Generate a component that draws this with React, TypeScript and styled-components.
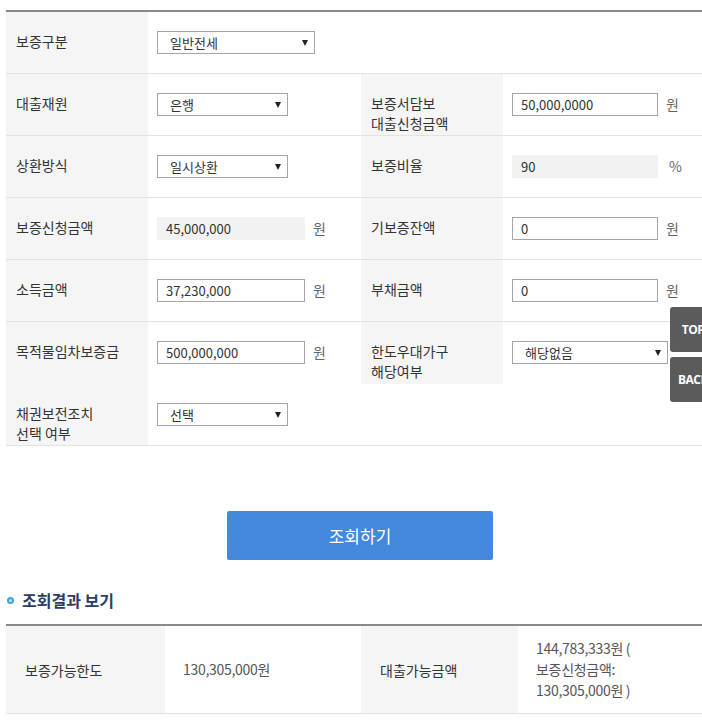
import React from "react";
import styled, { createGlobalStyle } from "styled-components";

const Global = createGlobalStyle`
  html, body { margin: 0; padding: 0; background: #fff; }
  body {
    font-family: "Noto Sans CJK KR", "Noto Sans", sans-serif;
    color: #333;
    overflow: hidden;
  }
  * { box-sizing: border-box; }
`;

const Page = styled.div`
  position: relative;
  width: 702px;
  min-height: 720px;
  padding: 10px 0 0 6px;
`;

const FormTable = styled.div`
  border-top: 2px solid #8a8a8a;
`;

const FormRow = styled.div<{ $noLine?: boolean }>`
  display: grid;
  grid-template-columns: 142px 213px 142px 1fr;
  min-height: 62px;
  border-bottom: ${(p) => (p.$noLine ? "none" : "1px solid #e3e3e3")};
`;

const Label = styled.div<{ $empty?: boolean }>`
  background: ${(p) => (p.$empty ? "#fff" : "#f5f5f5")};
  padding: 19px 0 0 10px;
  font-size: 14px;
  line-height: 20px;
  color: #333;
`;

const Value = styled.div`
  display: flex;
  align-items: flex-start;
  gap: 8px;
  padding: 19px 0 0 9px;
  font-size: 14px;
  line-height: 22px;
  color: #555;
`;

const TextInput = styled.input<{ $w?: number }>`
  width: ${(p) => p.$w ?? 148}px;
  height: 23px;
  border: 1px solid #a6a6a6;
  background: #fff;
  padding: 0 0 0 8px;
  font-family: "Noto Sans CJK KR", "Noto Sans", sans-serif;
  font-size: 13px;
  color: #333;
  outline: none;
`;

const ReadOnlyBox = styled.input<{ $w?: number }>`
  width: ${(p) => p.$w ?? 148}px;
  height: 23px;
  border: none;
  background: #f2f2f2;
  padding: 0 0 0 9px;
  font-family: "Noto Sans CJK KR", "Noto Sans", sans-serif;
  font-size: 13px;
  color: #333;
  outline: none;
`;

const SelectWrap = styled.div<{ $w: number }>`
  position: relative;
  width: ${(p) => p.$w}px;
  height: 23px;
  &::after {
    content: "";
    position: absolute;
    right: 7px;
    top: 9px;
    border-left: 3.5px solid transparent;
    border-right: 3.5px solid transparent;
    border-top: 6px solid #222;
    pointer-events: none;
  }
`;

const Select = styled.select`
  appearance: none;
  -webkit-appearance: none;
  width: 100%;
  height: 100%;
  border: 1px solid #a6a6a6;
  border-radius: 0;
  background: #fff;
  padding: 0 0 0 12px;
  font-family: "Noto Sans CJK KR", "Noto Sans", sans-serif;
  font-size: 13px;
  color: #333;
  outline: none;
`;

const Unit = styled.span<{ $gap?: number }>`
  margin-left: ${(p) => p.$gap ?? 0}px;
  font-size: 14px;
  color: #666;
`;

const ButtonRow = styled.div`
  display: flex;
  justify-content: center;
  padding: 65px 0 0 12px;
`;

const SearchButton = styled.button`
  width: 266px;
  height: 49px;
  border: none;
  border-radius: 2px;
  background: #4488dd;
  color: #fff;
  font-family: "Noto Sans CJK KR", "Noto Sans", sans-serif;
  font-size: 17px;
  cursor: pointer;
`;

const Heading = styled.h3`
  display: flex;
  align-items: center;
  gap: 8px;
  margin: 29px 0 12px 1px;
  font-size: 16px;
  font-weight: 700;
  line-height: 23px;
  color: #2c3d63;
`;

const Bullet = styled.span`
  width: 7px;
  height: 7px;
  border-radius: 50%;
  border: 2px solid #3fa3e3;
  background: #bfe2f7;
`;

const ResultTable = styled.div`
  display: grid;
  grid-template-columns: 159px 196px 157px 1fr;
  border-top: 2px solid #8a8a8a;
  border-bottom: 1px solid #e3e3e3;
  min-height: 90px;
`;

const ResultLabel = styled.div`
  display: flex;
  align-items: center;
  background: #f5f5f5;
  padding-left: 19px;
  font-size: 14px;
  color: #333;
`;

const ResultValue = styled.div`
  display: flex;
  align-items: center;
  padding-left: 18px;
  font-size: 14px;
  line-height: 21px;
  color: #555;
  letter-spacing: -0.3px;
`;

const SideButton = styled.a<{ $top: number }>`
  position: absolute;
  left: 670px;
  top: ${(p) => p.$top}px;
  width: 46px;
  height: 45px;
  display: flex;
  align-items: center;
  justify-content: center;
  border-radius: 3px;
  background: #5b5b5b;
  color: #fff;
  font-family: "Open Sans", "Noto Sans", sans-serif;
  font-size: 12px;
  font-weight: 700;
  letter-spacing: -0.5px;
  text-decoration: none;
`;

type Opt = { w: number; value: string };

const Dropdown = ({ w, value }: Opt) => (
  <SelectWrap $w={w}>
    <Select defaultValue={value}>
      <option>{value}</option>
    </Select>
  </SelectWrap>
);

export default function App() {
  return (
    <Page>
      <Global />
      <FormTable>
        <FormRow>
          <Label>보증구분</Label>
          <Value>
            <Dropdown w={158} value="일반전세" />
          </Value>
          <Label $empty />
          <Value />
        </FormRow>

        <FormRow>
          <Label>대출재원</Label>
          <Value>
            <Dropdown w={131} value="은행" />
          </Value>
          <Label>
            보증서담보
            <br />
            대출신청금액
          </Label>
          <Value>
            <TextInput $w={146} defaultValue="50,000,0000" />
            <Unit>원</Unit>
          </Value>
        </FormRow>

        <FormRow>
          <Label>상환방식</Label>
          <Value>
            <Dropdown w={131} value="일시상환" />
          </Value>
          <Label>보증비율</Label>
          <Value>
            <ReadOnlyBox $w={146} readOnly defaultValue="90" />
            <Unit $gap={3}>%</Unit>
          </Value>
        </FormRow>

        <FormRow>
          <Label>보증신청금액</Label>
          <Value>
            <ReadOnlyBox readOnly defaultValue="45,000,000" />
            <Unit>원</Unit>
          </Value>
          <Label>기보증잔액</Label>
          <Value>
            <TextInput $w={146} defaultValue="0" />
            <Unit>원</Unit>
          </Value>
        </FormRow>

        <FormRow>
          <Label>소득금액</Label>
          <Value>
            <TextInput defaultValue="37,230,000" />
            <Unit>원</Unit>
          </Value>
          <Label>부채금액</Label>
          <Value>
            <TextInput $w={146} defaultValue="0" />
            <Unit>원</Unit>
          </Value>
        </FormRow>

        <FormRow $noLine>
          <Label>목적물임차보증금</Label>
          <Value>
            <TextInput defaultValue="500,000,000" />
            <Unit>원</Unit>
          </Value>
          <Label>
            한도우대가구
            <br />
            해당여부
          </Label>
          <Value>
            <Dropdown w={156} value="해당없음" />
          </Value>
        </FormRow>

        <FormRow>
          <Label>
            채권보전조치
            <br />
            선택 여부
          </Label>
          <Value>
            <Dropdown w={131} value="선택" />
          </Value>
          <Label $empty />
          <Value />
        </FormRow>
      </FormTable>

      <ButtonRow>
        <SearchButton type="button">조회하기</SearchButton>
      </ButtonRow>

      <Heading>
        <Bullet />
        조회결과 보기
      </Heading>

      <ResultTable>
        <ResultLabel>보증가능한도</ResultLabel>
        <ResultValue>130,305,000원</ResultValue>
        <ResultLabel>대출가능금액</ResultLabel>
        <ResultValue>
          144,783,333원 (
          <br />
          보증신청금액:
          <br />
          130,305,000원 )
        </ResultValue>
      </ResultTable>

      <SideButton href="#" $top={307}>
        TOP
      </SideButton>
      <SideButton href="#" $top={357}>
        BACK
      </SideButton>
    </Page>
  );
}
